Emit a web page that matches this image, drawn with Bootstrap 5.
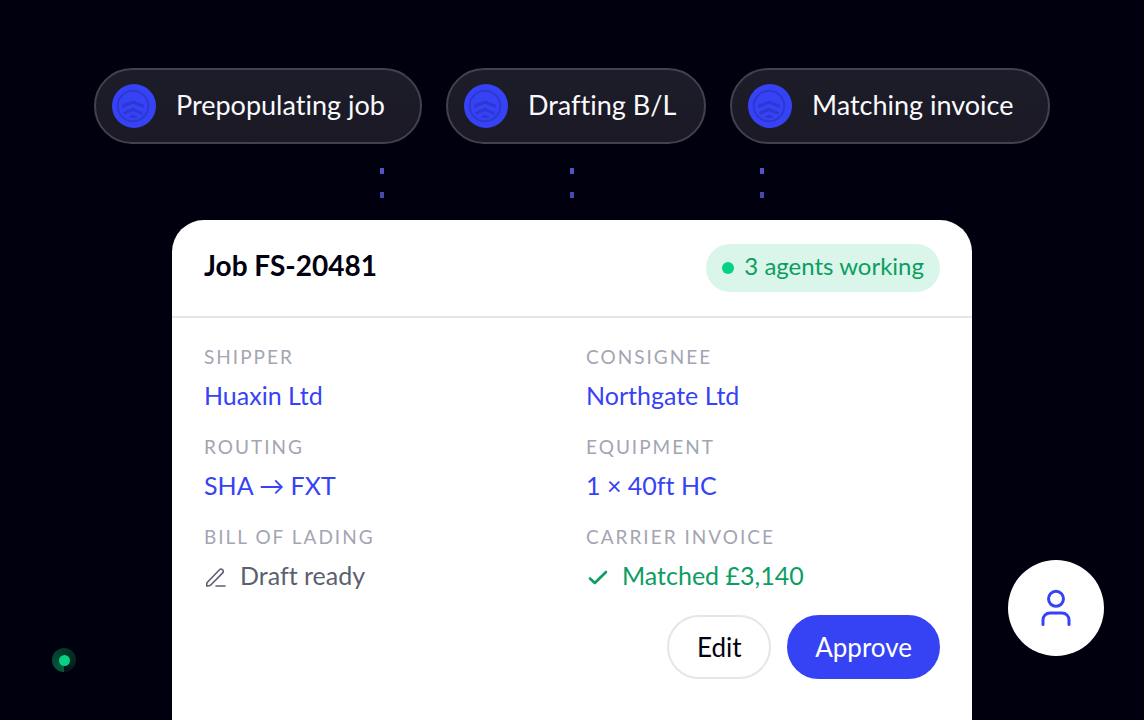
<!DOCTYPE html>
<html lang="en">
<head>
<meta charset="utf-8">
<meta name="viewport" content="width=device-width, initial-scale=1">
<title>Job FS-20481</title>
<link href="https://cdn.jsdelivr.net/npm/bootstrap@5.3.0/dist/css/bootstrap.min.css" rel="stylesheet">
<style>
  body { background: #00000f; font-family: Lato, "Liberation Sans", sans-serif; font-variant-ligatures: none; color: #00000f; }
  .stage { min-height: 100vh; padding-top: 68px; }
  .agents { display: grid; grid-template-columns: 328fr 260fr 320fr; gap: 24px; width: 100%; max-width: 956px; }
  .agent-chip { gap: 20px; padding: 14px 16px; border: 2px solid #42424e; border-radius: 38px; background: linear-gradient(#1d1d2a, #1a1924); color: #fafafc; font-size: 27px; line-height: 42px; white-space: nowrap; }
  .agent-chip span { padding-bottom: 2px; }
  .agent-chip svg { width: 44px; height: 44px; flex: none; }
  .links { gap: 186px; padding: 24px 0 22px; }
  .link-dash { width: 4px; height: 30px; background: repeating-linear-gradient(#5554c4 0 6px, transparent 6px 24px); -webkit-mask-image: linear-gradient(#000, rgba(0, 0, 0, .85)); mask-image: linear-gradient(#000, rgba(0, 0, 0, .85)); }
  .job { width: 100%; max-width: 800px; background: #fff; border-radius: 32px 32px 0 0; }
  .job-head { padding: 24px 32px; border-bottom: 2px solid #e5e5eb; }
  .job-title { font-size: 28px; line-height: 42px; font-weight: 700; }
  .status { gap: 10px; padding: 0 16px; border-radius: 24px; background: #daf6ea; color: #0c9d63; font-size: 24px; line-height: 44px; }
  .status-text { padding-bottom: 4px; }
  .status-dot { width: 12px; height: 12px; background: #06d285; }
  .job-body { padding: 25px 32px 40px; }
  .fields { display: grid; grid-template-columns: 1fr 1fr; gap: 14px 28px; }
  .fields dt { font-size: 19px; line-height: 28px; font-weight: 400; letter-spacing: 2px; color: #a3a5b3; text-transform: uppercase; }
  .fields dd { font-size: 25px; line-height: 36px; margin: 6px 0 0; color: #3643f5; padding-bottom: 6px; }
  .fields .has-icon { display: flex; align-items: center; gap: 12px; }
  .fields dd svg { width: 24px; height: 24px; flex: none; margin-top: 4px; }
  .fields .is-draft { color: #5c5f70; }
  .fields .is-matched { color: #0c9d63; }
  .actions { gap: 16px; margin-top: 16px; }
  .pill { height: 64px; min-width: 104px; padding: 0 26px; border: 2px solid #e5e5eb; border-radius: 32px; font-size: 26px; line-height: 36px; color: #00000f; }
  .pill-main, .pill-main:hover { background: #3643f5; border-color: #3643f5; color: #fff; }
  .profile { right: 40px; bottom: 64px; width: 96px; height: 96px; background: #fff; box-shadow: 0 8px 48px rgba(0, 0, 15, .12); }
  .pulse { left: 52px; bottom: 48px; width: 24px; height: 24px; background: conic-gradient(from 180deg, #045a3f, #033a2a 50%, #02141a); }
  .pulse-dot { width: 11px; height: 11px; background: #06d285; }
</style>
</head>
<body>
<svg class="d-none" aria-hidden="true">
  <symbol id="agent" viewBox="0 0 44 44">
    <circle cx="22" cy="22" r="22" fill="#3643f5"/>
    <g fill="none" stroke="#2c37d4">
      <circle cx="21" cy="22" r="15.300" stroke-width="2"/>
      <path d="M10 22.500 21 18l11 4.500M11.500 29.500l9.500-4.200 9.500 4.200" stroke-width="3"/>
    </g>
    <path d="M16 33 21 30.500l5 2.500q-5 2-10 0z" fill="#2c37d4"/>
  </symbol>
</svg>
<main class="stage d-flex flex-column align-items-center overflow-hidden">
  <div class="agents">
    <div class="agent-chip d-flex align-items-center"><svg aria-hidden="true"><use href="#agent"/></svg><span>Prepopulating job</span></div>
    <div class="agent-chip d-flex align-items-center"><svg aria-hidden="true"><use href="#agent"/></svg><span>Drafting B/L</span></div>
    <div class="agent-chip d-flex align-items-center"><svg aria-hidden="true"><use href="#agent"/></svg><span>Matching invoice</span></div>
  </div>
  <div class="links d-flex justify-content-center" aria-hidden="true">
    <div class="link-dash"></div><div class="link-dash"></div><div class="link-dash"></div>
  </div>
  <section class="job flex-grow-1">
    <header class="job-head d-flex justify-content-between align-items-start">
      <h1 class="job-title mb-0">Job FS-20481</h1>
      <div class="status d-flex align-items-center"><span class="status-dot rounded-circle"></span><span class="status-text">3 agents working</span></div>
    </header>
    <div class="job-body">
      <dl class="fields mb-0">
        <div><dt>Shipper</dt><dd>Huaxin Ltd</dd></div>
        <div><dt>Consignee</dt><dd>Northgate Ltd</dd></div>
        <div><dt>Routing</dt><dd>SHA → FXT</dd></div>
        <div><dt>Equipment</dt><dd>1 × 40ft HC</dd></div>
        <div><dt>Bill of lading</dt><dd class="is-draft has-icon"><svg viewBox="0 0 24 24" fill="none" stroke="currentColor" stroke-width="1.600" stroke-linecap="round" stroke-linejoin="round" aria-hidden="true"><path d="M3.200 17.500 15.500 4.800a2.200 2.200 0 0 1 3.200 3.100L6.500 20.200q-1.500 1-3.700.8-.4-2 .4-3.500zM12 21h9"/></svg><span>Draft ready</span></dd></div>
        <div><dt>Carrier invoice</dt><dd class="is-matched has-icon"><svg viewBox="0 0 24 24" fill="none" stroke="currentColor" stroke-width="2.600" stroke-linecap="round" stroke-linejoin="round" aria-hidden="true"><path d="M4 13.500l4.800 4.500L20 7"/></svg><span>Matched £3,140</span></dd></div>
      </dl>
      <div class="actions d-flex justify-content-end">
        <button type="button" class="btn pill">Edit</button>
        <button type="button" class="btn pill pill-main">Approve</button>
      </div>
    </div>
  </section>
</main>
<button type="button" class="profile btn rounded-circle border-0 p-0 position-fixed d-flex align-items-center justify-content-center" aria-label="Profile">
  <svg width="40" height="40" viewBox="0 0 40 40" fill="none" stroke="#3643f5" stroke-width="3" stroke-linecap="round" aria-hidden="true"><circle cx="20" cy="10.800" r="7.500"/><path d="M7 36.500v-4.500a7 7 0 0 1 7-7h12a7 7 0 0 1 7 7v4.500"/></svg>
</button>
<div class="pulse position-fixed rounded-circle d-flex align-items-center justify-content-center" aria-hidden="true"><span class="pulse-dot rounded-circle"></span></div>
<script src="https://cdn.jsdelivr.net/npm/bootstrap@5.3.0/dist/js/bootstrap.bundle.min.js"></script>
</body>
</html>
